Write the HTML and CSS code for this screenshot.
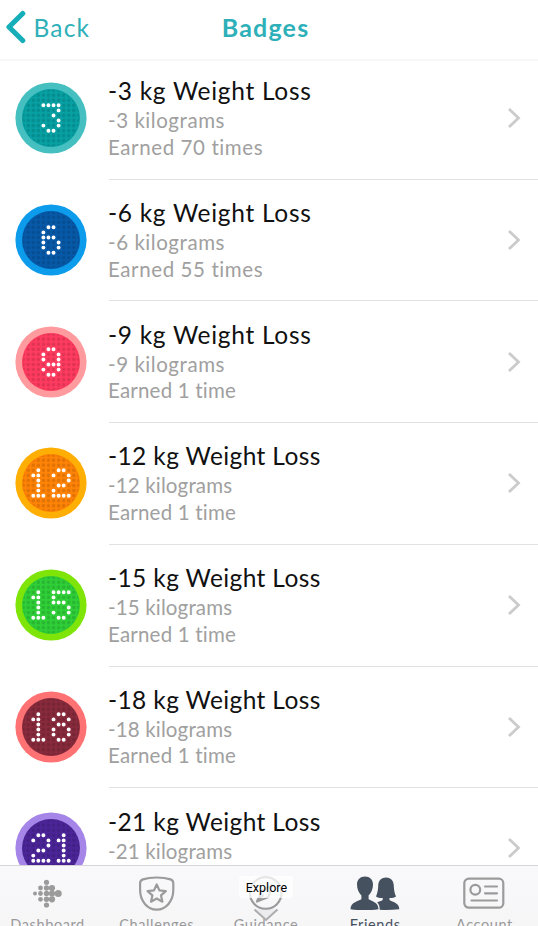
FILE: index.html
```html
<!DOCTYPE html>
<html lang="en">
<head>
<meta charset="utf-8">
<title>Badges</title>
<link rel="stylesheet" href="styles.css">
</head>
<body>
<svg class="defs" aria-hidden="true">
  <defs>
    <!-- LED digits, one unit per dot, origin at the top-left dot -->
    <path id="d1" d="M1 0h0M0 1h0M1 1h0M1 2h0M1 3h0M1 4h0M0 5h0M1 5h0M2 5h0"/>
    <path id="d2" d="M1 0h0M2 0h0M0 1h0M3 1h0M3 2h0M1 3h0M2 3h0M0 4h0M0 5h0M1 5h0M2 5h0M3 5h0"/>
    <path id="d3" d="M0 0h0M1 0h0M2 0h0M3 0h0M3 1h0M2 2h0M3 3h0M0 4h0M3 4h0M1 5h0M2 5h0"/>
    <path id="d5" d="M0 0h0M1 0h0M2 0h0M3 0h0M0 1h0M0 2h0M1 2h0M2 2h0M3 3h0M0 4h0M3 4h0M1 5h0M2 5h0"/>
    <path id="d6" d="M1 0h0M2 0h0M0 1h0M0 2h0M1 2h0M2 2h0M0 3h0M3 3h0M0 4h0M3 4h0M1 5h0M2 5h0"/>
    <path id="d8" d="M1 0h0M2 0h0M0 1h0M3 1h0M1 2h0M2 2h0M0 3h0M3 3h0M0 4h0M3 4h0M1 5h0M2 5h0"/>
    <path id="d9" d="M1 0h0M2 0h0M0 1h0M3 1h0M0 2h0M3 2h0M1 3h0M2 3h0M3 3h0M0 4h0M3 4h0M1 5h0M2 5h0"/>
    <pattern id="dots" width="1" height="1" patternUnits="userSpaceOnUse"><circle cx=".5" cy=".5" r=".36"/></pattern>
    <g id="disc">
      <circle class="rim" r="7.02"/>
      <circle class="face" r="5.72"/>
      <circle class="grid" r="5.6" fill="url(#dots)"/>
    </g>
  </defs>
</svg>

<div class="screen">
  <header class="nav">
    <a class="back"><svg width="22" height="36" viewBox="0 0 22 36"><path d="M18.700 4.500L5 18l13.700 13.500"/></svg><span>Back</span></a>
    <h1>Badges</h1>
  </header>

  <ul class="list">
    <li class="row">
      <svg class="badge teal" viewBox="-7.1 -7.1 14.2 14.2"><use href="#disc"/><use class="led" href="#d3" transform="translate(-1.5 -2.5)"/></svg>
      <div class="info"><h2>-3 kg Weight Loss</h2><p class="kilos">-3 kilograms</p><p class="earned">Earned 70 times</p></div>
      <svg class="chev" viewBox="0 0 14 22"><path d="M2 2l9.500 9L2 20"/></svg>
    </li>
    <li class="row">
      <svg class="badge blue" viewBox="-7.1 -7.1 14.2 14.2"><use href="#disc"/><use class="led" href="#d6" transform="translate(-1.5 -2.5)"/></svg>
      <div class="info"><h2>-6 kg Weight Loss</h2><p class="kilos">-6 kilograms</p><p class="earned">Earned 55 times</p></div>
      <svg class="chev" viewBox="0 0 14 22"><path d="M2 2l9.500 9L2 20"/></svg>
    </li>
    <li class="row">
      <svg class="badge red" viewBox="-7.1 -7.1 14.2 14.2"><use href="#disc"/><use class="led" href="#d9" transform="translate(-1.5 -2.5)"/></svg>
      <div class="info"><h2>-9 kg Weight Loss</h2><p class="kilos">-9 kilograms</p><p class="earned one">Earned 1 time</p></div>
      <svg class="chev" viewBox="0 0 14 22"><path d="M2 2l9.500 9L2 20"/></svg>
    </li>
    <li class="row">
      <svg class="badge orange" viewBox="-7.1 -7.1 14.2 14.2"><use href="#disc"/><use class="led" href="#d1" transform="translate(-3.5 -2.5)"/><use class="led" href="#d2" transform="translate(.5 -2.5)"/></svg>
      <div class="info teens"><h2>-12 kg Weight Loss</h2><p class="kilos">-12 kilograms</p><p class="earned one">Earned 1 time</p></div>
      <svg class="chev" viewBox="0 0 14 22"><path d="M2 2l9.500 9L2 20"/></svg>
    </li>
    <li class="row">
      <svg class="badge green" viewBox="-7.1 -7.1 14.2 14.2"><use href="#disc"/><use class="led" href="#d1" transform="translate(-3.5 -2.5)"/><use class="led" href="#d5" transform="translate(.5 -2.5)"/></svg>
      <div class="info teens"><h2>-15 kg Weight Loss</h2><p class="kilos">-15 kilograms</p><p class="earned one">Earned 1 time</p></div>
      <svg class="chev" viewBox="0 0 14 22"><path d="M2 2l9.500 9L2 20"/></svg>
    </li>
    <li class="row">
      <svg class="badge maroon" viewBox="-7.1 -7.1 14.2 14.2"><use href="#disc"/><use class="led" href="#d1" transform="translate(-3.5 -2.5)"/><use class="led" href="#d8" transform="translate(.5 -2.5)"/></svg>
      <div class="info teens"><h2>-18 kg Weight Loss</h2><p class="kilos">-18 kilograms</p><p class="earned one">Earned 1 time</p></div>
      <svg class="chev" viewBox="0 0 14 22"><path d="M2 2l9.500 9L2 20"/></svg>
    </li>
    <li class="row">
      <svg class="badge purple" viewBox="-7.1 -7.1 14.2 14.2"><use href="#disc"/><use class="led" href="#d2" transform="translate(-3.5 -2.5)"/><use class="led" href="#d1" transform="translate(1.5 -2.5)"/></svg>
      <div class="info teens"><h2>-21 kg Weight Loss</h2><p class="kilos">-21 kilograms</p></div>
      <svg class="chev" viewBox="0 0 14 22"><path d="M2 2l9.500 9L2 20"/></svg>
    </li>
  </ul>

  <nav class="tabs">
    <a class="tab dashboard">
      <svg width="40" height="40" viewBox="0 0 40 40" class="solid">
        <circle cx="7" cy="20.500" r="2"/>
        <circle cx="12.500" cy="15" r="2.400"/><circle cx="12.500" cy="20.500" r="2.400"/><circle cx="12.500" cy="26.300" r="2.400"/>
        <circle cx="18.500" cy="9.300" r="2.600"/><circle cx="18.500" cy="15" r="2.700"/><circle cx="18.500" cy="20.500" r="2.700"/><circle cx="18.500" cy="26.300" r="2.700"/><circle cx="18.500" cy="32" r="2.600"/>
        <circle cx="24" cy="15" r="3.100"/><circle cx="24" cy="20.500" r="3.100"/><circle cx="24" cy="26.300" r="3.100"/>
        <circle cx="30.200" cy="20.500" r="3.500"/>
      </svg>
      <span>Dashboard</span>
    </a>
    <a class="tab challenges">
      <svg width="40" height="40" viewBox="0 0 40 40" class="line">
        <path d="M19.700 4.500C25 4.500 30 5.200 33.500 6.400C35.500 7.100 36.300 8.200 36.300 10.200V17C36.300 28 29 36.600 19.700 36.600S3.100 28 3.100 17V10.200C3.100 8.200 4 7.100 6 6.400C9.500 5.200 14.500 4.500 19.700 4.500Z"/>
        <path d="M19.700 11.500l2.700 5.900 6.400.7-4.800 4.300 1.400 6.300-5.700-3.200-5.700 3.200 1.400-6.300-4.800-4.300 6.400-.7z"/>
      </svg>
      <span>Challenges</span>
    </a>
    <a class="tab guidance">
      <svg width="40" height="40" viewBox="0 0 40 40" class="line">
        <circle cx="19.700" cy="20" r="15.800"/>
        <path d="M26 12l-3.500 12L11 28.500l4.800-10.500zM11 28.500l6-6"/>
      </svg>
      <span>Guidance</span>
      <div class="tip">Explore</div>
      <svg class="down" width="26" height="14" viewBox="0 0 26 14"><path d="M1.500 1.500L13 12 24.500 1.500"/></svg>
    </a>
    <a class="tab friends">
      <svg width="52" height="40" viewBox="0 0 52 40">
        <path d="M16 3.500C20.800 3.500 24 6.600 24 11.500C24 16 22.200 20 19.600 22.500V26.300C22 28 29.500 29 29.500 36.200C21 37.400 10 37.400 1.500 36.200C1.500 29 10 28 12.400 26.300V22.500C9.800 20 8 16 8 11.500C8 6.600 11.200 3.500 16 3.500Z"/>
        <path d="M37 4.500C31.500 4.500 29.300 8.500 29.200 13C29.100 17.500 28.200 20.500 27 23.500C29 24.900 31.500 25.200 33.700 25V27C32 28 30 28.500 28.100 29.200C30.100 31.200 30.700 33.500 30.700 36.800C37 37.200 43.500 37 50.300 36.200C50.300 29.800 43.500 29 40.500 27V25C42.500 25.200 45 24.900 47 23.500C45.700 20.500 44.900 17.500 44.800 13C44.700 8.500 42.500 4.500 37 4.500Z"/>
      </svg>
      <span>Friends</span>
    </a>
    <a class="tab account">
      <svg width="44" height="40" viewBox="0 0 44 40" class="line">
        <rect x="2.300" y="5.700" width="39" height="29" rx="4.500"/>
        <circle cx="13.300" cy="16.800" r="4.900"/>
        <path d="M23 13.500h12M23 20.300h12M9.500 27.500h25.500"/>
      </svg>
      <span>Account</span>
    </a>
  </nav>
</div>
</body>
</html>
```

FILE: styles.css
```css
* { box-sizing: border-box; margin: 0; padding: 0; }

body {
  background: #fff;
  font-family: Lato, "Open Sans", sans-serif;
  overflow: hidden;
}

.defs { position: absolute; width: 0; height: 0; }

.screen {
  width: 538px;
  height: 926px;
  display: flex;
  flex-direction: column;
  overflow: hidden;
}

/* Navigation bar */
.nav {
  height: 61px;
  flex: none;
  display: grid;
  grid-template-columns: 200px 1fr 207px;
  border-bottom: 2px solid #f7f7f7;
  color: #2eb0b9;
}
.back { display: flex; padding: 9px 0 0 4px; }
.back path { fill: none; stroke: #16aeb9; stroke-width: 5.200; stroke-linecap: round; stroke-linejoin: round; }
.back span { font-size: 24.500px; line-height: 34px; margin: 2px 0 0 7.500px; letter-spacing: 1.200px; }
.nav h1 { font-size: 25px; line-height: 34px; padding-top: 10px; text-align: center; letter-spacing: 1.200px; white-space: nowrap; }

/* Badge list */
.list { list-style: none; flex: 1; min-height: 0; overflow: hidden; }
.row {
  height: 121.700px;
  display: grid;
  grid-template-columns: 109px 1fr 36px;
}
.row:first-child { margin-top: -2.900px; }
.badge { width: 72px; height: 72px; margin: 24.200px 0 0 15.400px; }
.info { border-bottom: 1px solid #e2e2e2; padding-top: 17.300px; margin-right: -36px; white-space: nowrap; }
.info h2 { font-size: 24.500px; line-height: 32px; font-weight: 400; color: #111; letter-spacing: .7px; margin-left: -1px; }
.info p { font-size: 20.500px; line-height: 26.500px; color: #a0a0a0; letter-spacing: .55px; margin-left: -1px; }
.info .earned { letter-spacing: .6px; }
.info .one { letter-spacing: .2px; }
.info.teens h2 { letter-spacing: .38px; }
.info.teens .kilos { letter-spacing: .15px; }
.chev { width: 14px; height: 22px; margin: 49.200px 0 0 5px; }
.chev path { fill: none; stroke: #cbcbcb; stroke-width: 2.800; }

.rim { fill: var(--rim); }
.face { fill: var(--face); }
#dots circle { fill: #000; }
.grid { opacity: .12; }
.led { stroke: #fff; stroke-width: .78; stroke-linecap: round; fill: none; }

.teal { --rim: #46bfc0; --face: #07a0a3; }
.blue { --rim: #0c9ceb; --face: #0759a8; }
.red { --rim: #ff9b9e; --face: #ff3b60; }
.orange { --rim: #ffaf04; --face: #ff8306; }
.green { --rim: #7fe407; --face: #2fcf38; }
.maroon { --rim: #ff7274; --face: #872a3c; }
.purple { --rim: #a586e8; --face: #4b2598; }

/* Tab bar */
.tabs {
  flex: none;
  height: 61px;
  width: 546px;
  margin-left: -7px;
  display: grid;
  grid-template-columns: repeat(5, 1fr);
  border-top: 1px solid #d5d5d8;
  background: linear-gradient(#f9f9fb, #f6f6f7);
  overflow: hidden;
}
.tab {
  position: relative;
  display: flex;
  flex-direction: column;
  align-items: center;
  padding-top: 7px;
  color: #9a9a9b;
  font-size: 14.500px;
  letter-spacing: .6px;
}
.tab span { line-height: 18px; margin-top: 3px; }
.solid { fill: #9b9b9b; }
.line { fill: none; stroke: #9b9b9b; stroke-width: 2.200; stroke-linecap: round; stroke-linejoin: round; }
.friends { color: #465160; }
.friends svg { fill: #465160; }

.tip {
  position: absolute;
  top: 10px;
  left: 28px;
  width: 54px;
  height: 22px;
  border-radius: 3px;
  background: rgba(255, 255, 255, .75);
  color: #000;
  font: 12.500px/23px Roboto, sans-serif;
  letter-spacing: 0;
  text-align: center;
}
.down { position: absolute; top: 42px; left: 41.500px; }
.down path { fill: rgba(225, 225, 227, .5); stroke: #adadae; stroke-width: 2; }
```
